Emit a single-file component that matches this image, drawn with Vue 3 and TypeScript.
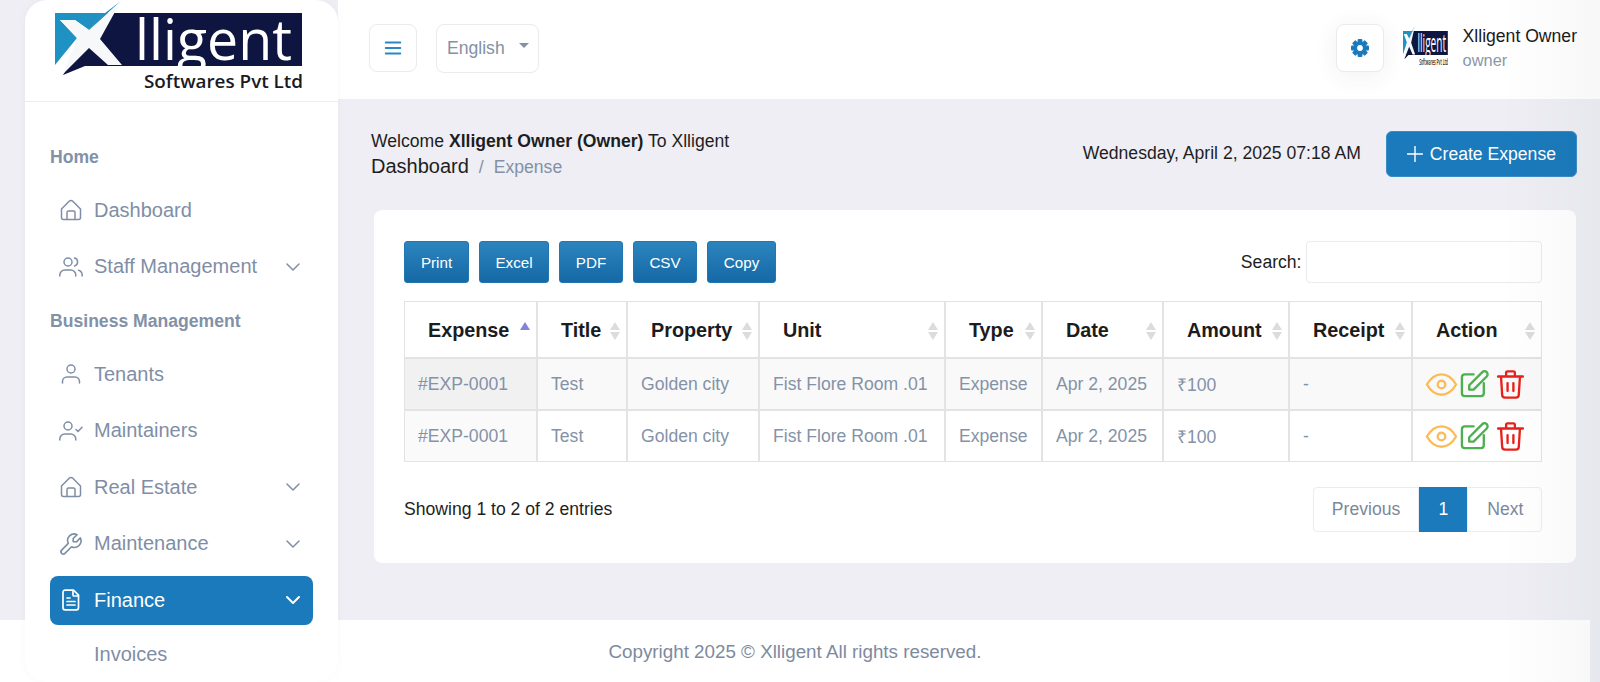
<script setup lang="ts">
interface NavItem {
  label: string
  icon?: string
  chevron?: boolean
  active?: boolean
  section?: boolean
  sub?: boolean
}

const nav: NavItem[] = [
  { label: 'Home', section: true },
  { label: 'Dashboard', icon: 'home' },
  { label: 'Staff Management', icon: 'users', chevron: true },
  { label: 'Business Management', section: true },
  { label: 'Tenants', icon: 'user' },
  { label: 'Maintainers', icon: 'userCheck' },
  { label: 'Real Estate', icon: 'home', chevron: true },
  { label: 'Maintenance', icon: 'tool', chevron: true },
  { label: 'Finance', icon: 'file', chevron: true, active: true },
  { label: 'Invoices', sub: true },
]

const iconPaths: Record<string, string[]> = {
  home: ['M2.5 11l7.7-7.8a2.5 2.5 0 0 1 3.6 0l7.7 7.8v8.500a2 2 0 0 1-2 2h-15a2 2 0 0 1-2-2z', 'M8 21.500v-7a1.500 1.500 0 0 1 1.500-1.500h5a1.500 1.500 0 0 1 1.500 1.500v7'],
  users: ['M9 3a4 4 0 1 0 0 8 4 4 0 0 0 0-8z', 'M0.8 21v-1a5 5 0 0 1 5-5h6a5 5 0 0 1 5 5v1', 'M15.500 3.100a4 4 0 0 1 0 7.800', 'M23.200 21v-1a5 5 0 0 0-3.700-4.700'],
  user: ['M12 3a4 4 0 1 0 0 8 4 4 0 0 0 0-8z', 'M3.500 21v-1.500a4.500 4.500 0 0 1 4.500-4.500h8a4.500 4.500 0 0 1 4.500 4.500V21'],
  userCheck: ['M9 3a4 4 0 1 0 0 8 4 4 0 0 0 0-8z', 'M0.8 21v-1a5 5 0 0 1 5-5h6a5 5 0 0 1 5 5v1', 'M17 10.500l2 2 4-4.300'],
  tool: ['M7 10h3V7L6.500 3.500a6 6 0 0 1 8 8l6 6a2 2 0 0 1-3 3l-6-6a6 6 0 0 1-8-8L7 10'],
  file: ['M6 2.200h8.500l5 5v12.600a2 2 0 0 1-2 2H6a2 2 0 0 1-2-2V4.200a2 2 0 0 1 2-2z', 'M14 2.500V7a1 1 0 0 0 1 1h4.500', 'M8 10h3', 'M8 13.500h8', 'M8 17h8'],
}

const columns = [
  { label: 'Expense', width: 133, sorted: true },
  { label: 'Title', width: 90 },
  { label: 'Property', width: 132 },
  { label: 'Unit', width: 186 },
  { label: 'Type', width: 97 },
  { label: 'Date', width: 121 },
  { label: 'Amount', width: 126 },
  { label: 'Receipt', width: 123 },
  { label: 'Action', width: 130 },
]

const rows = [
  ['#EXP-0001', 'Test', 'Golden city', 'Fist Flore Room .01', 'Expense', 'Apr 2, 2025', '₹100', '-'],
  ['#EXP-0001', 'Test', 'Golden city', 'Fist Flore Room .01', 'Expense', 'Apr 2, 2025', '₹100', '-'],
]

const exportButtons = [
  { label: 'Print', width: 65 },
  { label: 'Excel', width: 70 },
  { label: 'PDF', width: 64 },
  { label: 'CSV', width: 64 },
  { label: 'Copy', width: 69 },
]
const gearTeeth = [0, 45, 90, 135]
</script>

<template>
  <div class="app">
    <aside class="sidebar">
      <div class="brand">
        <svg class="logo" viewBox="25 0 313 101" width="313" height="101">
          <defs>
            <linearGradient id="xl-blue" x1="0" y1="0" x2="1" y2="0.6">
              <stop offset="0" stop-color="#1793c4" />
              <stop offset="1" stop-color="#2a8fc0" />
            </linearGradient>
          </defs>
          <g id="xl-logo">
            <polygon points="63,75 85,66 302,66 302,13 106,13 89,30" fill="#0d1540" />
            <polygon points="55,13 105,13 121,1 89,30 75,20 60,20 77,38 55,65" fill="url(#xl-blue)" />
            <polygon points="60,20 75,20 89,30 121,1 100,39 122,65 108,65 89,48 63,74 77,38" fill="#f6f8fa" />
            <text x="135" y="60" font-size="56" textLength="157" lengthAdjust="spacingAndGlyphs" fill="#ffffff" class="logo-word">lligent</text>
            <text x="144" y="88" font-size="18" textLength="159" lengthAdjust="spacingAndGlyphs" fill="#1b1b1f" class="logo-sub">Softwares Pvt Ltd</text>
          </g>
        </svg>
      </div>
      <nav class="nav">
        <template v-for="item in nav" :key="item.label">
          <div v-if="item.section" class="nav-section">{{ item.label }}</div>
          <div v-else class="nav-item" :class="{ active: item.active, sub: item.sub }">
            <svg v-if="item.icon" class="nav-icon" :class="{ flip: item.icon === 'tool' }" viewBox="0 0 24 24" width="24" height="24" fill="none" stroke="currentColor" :stroke-width="item.active ? 1.7 : 1.5" stroke-linecap="round" stroke-linejoin="round">
              <path v-for="d in iconPaths[item.icon]" :key="d" :d="d" />
            </svg>
            <span class="nav-label">{{ item.label }}</span>
            <svg v-if="item.chevron" class="nav-chevron" viewBox="0 0 24 24" width="24" height="24" fill="none" stroke="currentColor" :stroke-width="item.active ? 2 : 1.5" stroke-linecap="round" stroke-linejoin="round">
              <path d="M6 9l6 6 6-6" />
            </svg>
          </div>
        </template>
      </nav>
    </aside>

    <main class="main">
      <header class="topbar">
        <button class="icon-btn" type="button" aria-label="Menu">
          <svg viewBox="0 0 24 24" width="22" height="22" fill="none" stroke="#2b86c5" stroke-width="2" stroke-linecap="round">
            <path d="M4 6h16M4 12h16M4 18h16" />
          </svg>
        </button>
        <div class="lang">
          <span>English</span>
          <i class="caret"></i>
        </div>
        <div class="topbar-right">
          <button class="icon-btn gear-btn" type="button" aria-label="Settings">
            <svg viewBox="0 0 18 18" width="18" height="18">
              <g fill="#1a7abb">
                <rect v-for="a in gearTeeth" :key="a" x="6.6" y="0" width="4.8" height="18" rx="1" :transform="`rotate(${a} 9 9)`" />
              </g>
              <circle cx="9" cy="9" r="6.6" fill="#1a7abb" />
              <circle cx="9" cy="9" r="2.9" fill="#ffffff" />
            </svg>
          </button>
          <svg class="avatar" viewBox="55 0 248 101" preserveAspectRatio="none" width="45" height="46">
            <use href="#xl-logo" />
          </svg>
          <div class="who">
            <div class="who-name">Xlligent Owner</div>
            <div class="who-role">owner</div>
          </div>
        </div>
      </header>

      <section class="content">
        <div class="title-row">
          <div class="title-left">
            <div class="welcome">Welcome <b>Xlligent Owner (Owner)</b> To Xlligent</div>
            <div class="crumbs">
              <span class="crumb-home">Dashboard</span>
              <span class="crumb-sep">/</span>
              <span class="crumb-cur">Expense</span>
            </div>
          </div>
          <div class="title-right">
            <span class="date">Wednesday, April 2, 2025 07:18 AM</span>
            <button class="create" type="button">
              <svg viewBox="0 0 16 16" width="16" height="16" fill="none" stroke="#fff" stroke-width="1.4" stroke-linecap="round">
                <path d="M8 0.5v15M0.5 8h15" />
              </svg>
              <span class="create-label">Create Expense</span>
            </button>
          </div>
        </div>

        <div class="card">
          <div class="toolbar">
            <div class="exports">
              <button v-for="b in exportButtons" :key="b.label" class="export" type="button" :style="{ width: b.width + 'px' }">{{ b.label }}</button>
            </div>
            <label class="search">Search: <input type="text" /></label>
          </div>

          <table class="grid">
            <colgroup>
              <col v-for="c in columns" :key="c.label" :style="{ width: c.width + 'px' }" />
            </colgroup>
            <thead>
              <tr>
                <th v-for="c in columns" :key="c.label">
                  {{ c.label }}
                  <span class="sort">
                    <i class="up" :class="{ on: c.sorted }"></i>
                    <i v-if="!c.sorted" class="down"></i>
                  </span>
                </th>
              </tr>
            </thead>
            <tbody>
              <tr v-for="(r, i) in rows" :key="i">
                <td v-for="(v, j) in r" :key="j">{{ v }}</td>
                <td class="actions">
                  <svg viewBox="0 0 24 24" width="35" height="35" fill="none" stroke="#fdbb55" stroke-width="1.6" stroke-linecap="round" stroke-linejoin="round">
                    <circle cx="12" cy="12" r="2.6" />
                    <path d="M22 12c-2.667 4.667-6 7-10 7s-7.333-2.333-10-7c2.667-4.667 6-7 10-7s7.333 2.333 10 7" />
                  </svg>
                  <svg viewBox="2 0 24 24" width="35" height="35" fill="none" stroke="#4caf50" stroke-width="1.6" stroke-linecap="round" stroke-linejoin="round">
                    <path d="M12 5H6a2 2 0 0 0-2 2v11a2 2 0 0 0 2 2h11a2 2 0 0 0 2-2v-7" />
                    <path d="M9 15.5v-3L18 3.5a2.1 2.1 0 0 1 3 3l-9 9z" />
                  </svg>
                  <svg viewBox="0.7 0 24 24" width="35" height="35" fill="none" stroke="#e8201a" stroke-width="1.6" stroke-linecap="round" stroke-linejoin="round">
                    <path d="M3.5 6.5h17M10 11v5.5M14 11v5.5M5.5 6.5l.8 12.5a2 2 0 0 0 2 2h7.400a2 2 0 0 0 2-2l.8-12.500M9 6.500V4a1 1 0 0 1 1-1h4a1 1 0 0 1 1 1v2.500" />
                  </svg>
                </td>
              </tr>
            </tbody>
          </table>

          <div class="table-foot">
            <span class="info">Showing 1 to 2 of 2 entries</span>
            <div class="pager">
              <span class="page">Previous</span>
              <span class="page current">1</span>
              <span class="page">Next</span>
            </div>
          </div>
        </div>
      </section>
    </main>

    <footer class="footer">Copyright 2025 © Xlligent All rights reserved.</footer>
    <div class="edge-shade"></div>
  </div>
</template>

<style>
html,
body {
  margin: 0;
  background: #eeeef4;
}
</style>

<style scoped>
.app {
  position: relative;
  display: grid;
  grid-template-columns: 25px 313px 1fr;
  grid-template-rows: 620px 62px;
  width: 1600px;
  height: 682px;
  overflow: hidden;
  background: #eeeef4;
  font-family: "Liberation Sans", Arial, sans-serif;
  font-size: 17.6px;
  color: #1e1e1e;
}

.sidebar {
  grid-column: 2;
  grid-row: 1 / 3;
  z-index: 2;
  background: #ffffff;
  border-radius: 22px;
  overflow: hidden;
  box-shadow: 0 0 10px rgba(60, 60, 90, 0.03);
}

.brand {
  height: 101px;
  border-bottom: 1px solid #ececf0;
}

.logo {
  display: block;
}

.logo-word {
  font-family: "Open Sans", sans-serif;
  font-weight: 400;
}

.logo-sub {
  font-family: "Open Sans", sans-serif;
  font-weight: 600;
}

.nav {
  padding: 38.5px 25px 0;
}

.nav-section {
  height: 32px;
  line-height: 32px;
  margin: 13.5px 0 13px;
  font-weight: 700;
  color: #8291a8;
}

.nav-section:first-child {
  margin-top: 0;
}

.nav-item {
  display: flex;
  align-items: center;
  gap: 11px;
  height: 49px;
  margin-bottom: 7.6px;
  padding: 0 8px 0 9px;
  border-radius: 8px;
  font-size: 20px;
  color: #7f8ea6;
}

.nav-item.sub {
  height: 44px;
  padding-left: 44px;
}

.nav-item.active {
  background: #1a7abb;
  color: #ffffff;
}

.nav-icon {
  flex: none;
}

.nav-icon.flip {
  transform: scaleX(-1) scale(1.1);
}

.nav-label {
  flex: 1;
}

.nav-chevron {
  flex: none;
}

.main {
  grid-column: 3;
  grid-row: 1;
  min-width: 0;
}

.topbar {
  display: flex;
  align-items: center;
  gap: 19px;
  height: 99px;
  box-sizing: border-box;
  padding: 0 23px 3px 31px;
  background: #ffffff;
}

.icon-btn {
  display: flex;
  align-items: center;
  justify-content: center;
  width: 48px;
  height: 48px;
  padding: 0;
  background: #ffffff;
  border: 1px solid #eaeaef;
  border-radius: 8px;
}

.lang {
  display: flex;
  align-items: center;
  gap: 14px;
  box-sizing: border-box;
  width: 103px;
  height: 49px;
  padding-left: 10px;
  background: #ffffff;
  border: 1px solid #eaeaef;
  border-radius: 8px;
  color: #8391a6;
}

.caret {
  width: 0;
  height: 0;
  margin-top: -6px;
  border-left: 5px solid transparent;
  border-right: 5px solid transparent;
  border-top: 5px solid #8391a6;
}

.topbar-right {
  display: flex;
  align-items: center;
  margin-left: auto;
}

.gear-btn {
  box-shadow: 0 4px 24px rgba(60, 60, 90, 0.07);
}

.avatar {
  margin: 0 15px 0 19px;
}

.who-name {
  line-height: 23px;
  color: #1a1a1a;
}

.who-role {
  line-height: 24px;
  font-size: 16.4px;
  color: #8a97aa;
}

.content {
  padding: 0 23px 0 35px;
}

.title-row {
  display: flex;
  align-items: center;
  justify-content: space-between;
  height: 109px;
  margin-bottom: 2px;
  margin-left: -2px;
}

.welcome {
  line-height: 22px;
}

.crumbs {
  display: flex;
  align-items: baseline;
  height: 24px;
  padding-top: 2px;
  line-height: 24px;
}

.crumb-home {
  font-size: 20px;
}

.crumb-sep {
  margin: 0 10px;
  color: #8391a6;
}

.crumb-cur {
  color: #8391a6;
}

.title-right {
  display: flex;
  align-items: center;
  gap: 25px;
}

.create {
  display: flex;
  align-items: center;
  gap: 7px;
  height: 46px;
  padding: 0 20px;
  background: #1a7abb;
  border: 1px solid #3a8cc4;
  border-radius: 6px;
  color: #ffffff;
  font: inherit;
}

.create-label {
  padding-top: 2px;
}

.card {
  box-sizing: border-box;
  width: 1202px;
  height: 353px;
  margin-left: 0.5px;
  padding: 31px 34px 0 30.5px;
  background: #ffffff;
  border-radius: 8px;
}

.toolbar {
  display: flex;
  align-items: center;
  justify-content: space-between;
  height: 42px;
  margin-bottom: 18px;
}

.exports {
  display: flex;
  gap: 10px;
}

.export {
  height: 42px;
  padding: 0;
  background: linear-gradient(180deg, #2c84be, #1569a6);
  border: 1px solid #2277b0;
  border-radius: 3px;
  color: #ffffff;
  font: inherit;
  font-size: 15.2px;
}

.search {
  display: flex;
  align-items: center;
  gap: 4px;
}

.search input {
  box-sizing: border-box;
  width: 236px;
  height: 42px;
  background: #ffffff;
  border: 1px solid #eaeaef;
  border-radius: 4px;
}

.grid {
  table-layout: fixed;
  width: 1138px;
  border-collapse: separate;
  border-spacing: 0;
}

.grid th,
.grid td {
  box-sizing: border-box;
  border: 1px solid #e3e3e6;
  text-align: left;
  white-space: nowrap;
}

.grid th {
  position: relative;
  height: 57px;
  padding: 1px 0 0 23px;
  font-size: 19.8px;
  font-weight: 700;
  color: #1c1c1c;
}

.grid td {
  height: 52px;
  padding: 0 0 0 13px;
  color: #8492a8;
}

.grid tbody tr:nth-child(odd) td {
  background: #f9f9f9;
}

.grid tbody tr:nth-child(odd) td:first-child {
  background: #f1f1f1;
}

.grid tbody tr:nth-child(even) td:first-child {
  background: #fafafa;
}

.grid td.actions {
  padding: 0 0 0 11px;
  font-size: 0;
  line-height: 0;
}

.sort {
  position: absolute;
  top: 20px;
  right: 6.5px;
  display: flex;
  flex-direction: column;
  gap: 2px;
}

.sort i {
  display: block;
  width: 0;
  height: 0;
  border-left: 5.5px solid transparent;
  border-right: 5.5px solid transparent;
}

.sort .up {
  border-bottom: 8px solid #dcdcdc;
}

.sort .up.on {
  border-bottom-color: #8383d8;
}

.sort .down {
  border-top: 8px solid #dcdcdc;
}

.table-foot {
  display: flex;
  align-items: center;
  justify-content: space-between;
  margin-top: 25px;
}

.pager {
  display: flex;
}

.page {
  display: flex;
  align-items: center;
  justify-content: center;
  box-sizing: border-box;
  height: 45px;
  padding: 0 18px;
  background: #ffffff;
  border: 1px solid #ececf0;
  color: #7b889c;
}

.page:first-child {
  border-radius: 4px 0 0 4px;
}

.page:last-child {
  padding-right: 17px;
  padding-left: 19px;
  border-radius: 0 4px 4px 0;
}

.page.current {
  width: 48px;
  padding: 0;
  background: #1a7abb;
  border-color: #1a7abb;
  color: #ffffff;
}

.footer {
  grid-column: 1 / -1;
  grid-row: 2;
  width: 1590px;
  height: 62px;
  line-height: 64px;
  text-align: center;
  background: #ffffff;
  font-size: 18.8px;
  color: #7d8a9e;
}

.edge-shade {
  position: absolute;
  top: 0;
  right: 0;
  bottom: 0;
  width: 100px;
  z-index: 3;
  pointer-events: none;
  background: linear-gradient(90deg, rgba(40, 40, 70, 0), rgba(40, 40, 70, 0.035));
}
</style>
